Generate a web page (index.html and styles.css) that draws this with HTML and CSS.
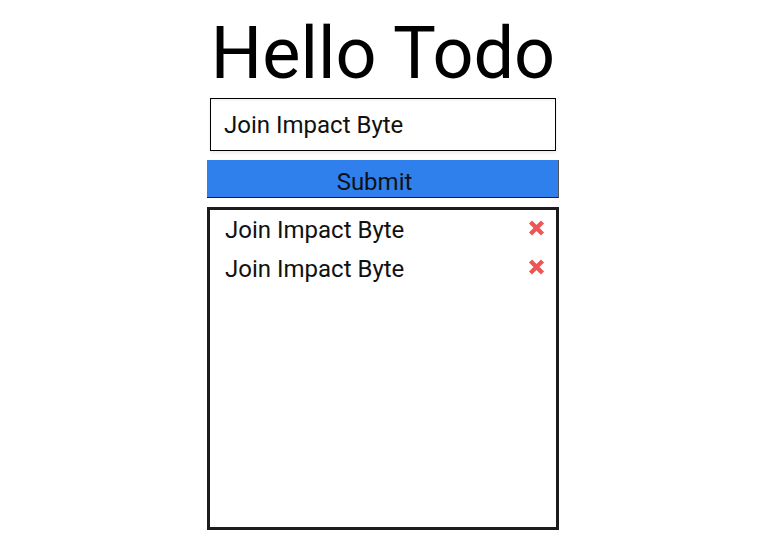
FILE: index.html
```html
<!DOCTYPE html>
<html>
<head>
<meta charset="utf-8">
<link rel="stylesheet" href="styles.css">
</head>
<body>
<div class="app">
  <h1 class="title">Hello Todo</h1>
  <form class="todo-form">
    <input class="todo-input" type="text" value="Join Impact Byte">
    <button class="submit" type="button">Submit</button>
  </form>
  <ul class="todo-list">
    <li class="todo-item"><span class="todo-text">Join Impact Byte</span><svg class="remove" width="17" height="16" viewBox="0 0 17 16"><path d="M2.5 2 L14.5 14 M14.5 2 L2.5 14" stroke="#eb5757" stroke-width="4.4" stroke-linecap="butt"/></svg></li>
    <li class="todo-item"><span class="todo-text">Join Impact Byte</span><svg class="remove" width="17" height="16" viewBox="0 0 17 16"><path d="M2.5 2 L14.5 14 M14.5 2 L2.5 14" stroke="#eb5757" stroke-width="4.4" stroke-linecap="butt"/></svg></li>
  </ul>
</div>
</body>
</html>
```
FILE: styles.css
```css
html, body {
  margin: 0;
  padding: 0;
  background: #fff;
}
body {
  font-family: Roboto, "Liberation Sans", sans-serif;
  color: #000;
}
.app {
  width: 352px;
  margin: 0 auto;
  padding-right: 1px;
  display: flex;
  flex-direction: column;
  align-items: center;
}
.title {
  margin: 10px 0 0;
  font-size: 72px;
  font-weight: 400;
  line-height: 88px;
  height: 88px;
  white-space: nowrap;
}
.todo-form {
  width: 100%;
  display: flex;
  flex-direction: column;
  align-items: center;
}
.todo-input {
  box-sizing: border-box;
  width: 346px;
  height: 53px;
  border: 1px solid #000;
  margin: 0;
  padding: 0 13px;
  font-family: Roboto, "Liberation Sans", sans-serif;
  font-size: 24px;
  color: #111;
  outline: none;
  box-shadow: inset 0 3px 3px -2px rgba(0,0,0,0.08), 0 2px 3px rgba(0,0,0,0.08);
}
.submit {
  box-sizing: border-box;
  margin-top: 9px;
  width: 352px;
  height: 38px;
  border: none;
  border-bottom: 1px solid #1a1a1a;
  border-right: 1px solid #555;
  background: #2f80ec;
  font-family: Roboto, "Liberation Sans", sans-serif;
  font-size: 24px;
  color: #111;
  padding: 0 16px 0 0;
  line-height: 44px;
}
.todo-list {
  box-sizing: border-box;
  list-style: none;
  margin: 9px 0 0;
  padding: 2px 11px 0 15px;
  width: 352px;
  height: 323px;
  border: 3px solid #1c1c1c;
}
.todo-item {
  display: flex;
  justify-content: space-between;
  align-items: flex-start;
  height: 39px;
  font-size: 24px;
  line-height: 36px;
  color: #111;
}
.remove {
  display: block;
  margin-top: 8px;
}
```
